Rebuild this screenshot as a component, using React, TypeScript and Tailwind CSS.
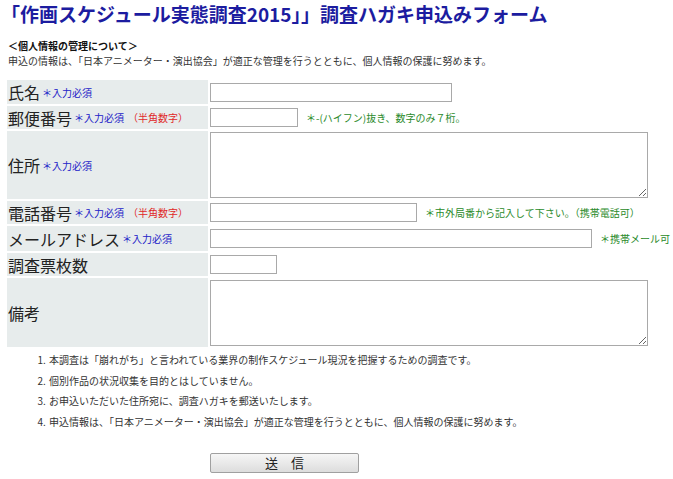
import type { ReactNode } from "react";

const JP = "font-['Noto_Sans_CJK_JP','Noto_Sans',sans-serif]";

function Required() {
  return <span className="ml-[2px] text-[10px] text-[#2323c8]">＊入力必須</span>;
}

function HalfWidth() {
  return <span className="ml-[4px] text-[10px] text-[#e02828]">（半角数字）</span>;
}

function Note({ children }: { children: ReactNode }) {
  return <span className="ml-[8px] text-[10px] text-[#2a8a2a]">{children}</span>;
}

function Row({
  label,
  height,
  children,
}: {
  label: ReactNode;
  height: string;
  children: ReactNode;
}) {
  return (
    <>
      <div className={`flex items-center bg-[#e7ecec] pl-[1px] ${height}`}>
        {label}
      </div>
      <div className={`flex items-center ${height}`}>{children}</div>
    </>
  );
}

const inputCls =
  "h-[19px] border border-[#a9a9a9] bg-white outline-none";
const textareaCls =
  "h-[66px] w-[438px] resize border border-[#a9a9a9] bg-white outline-none";

export default function App() {
  return (
    <div className={`min-h-screen w-[673px] bg-white text-[#333] ${JP}`}>
      <h1 className="pl-[1px] pt-[2px] text-[19px] font-bold leading-[24px] text-[#1c1ca0]">
        「作画スケジュール実態調査2015」」調査ハガキ申込みフォーム
      </h1>

      <div className="mt-[12px] pl-[8px] text-[10px] leading-[15px]">
        <p className="font-bold text-[#111]">＜個人情報の管理について＞</p>
        <p>
          申込の情報は、「日本アニメーター・演出協会」が適正な管理を行うとともに、個人情報の保護に努めます。
        </p>
      </div>

      <div className="ml-[7px] mt-[12px] grid w-[664px] grid-cols-[201px_1fr] gap-[2px]">
        <Row
          height="h-[24px]"
          label={
            <>
              <span className="text-[16px] text-[#222]">氏名</span>
              <Required />
            </>
          }
        >
          <input className={`${inputCls} w-[242px]`} />
        </Row>
        <Row
          height="h-[23px]"
          label={
            <>
              <span className="text-[16px] text-[#222]">郵便番号</span>
              <Required />
              <HalfWidth />
            </>
          }
        >
          <input className={`${inputCls} w-[88px]`} />
          <Note>＊-(ハイフン)抜き、数字のみ７桁。</Note>
        </Row>
        <Row
          height="h-[68px]"
          label={
            <>
              <span className="text-[16px] text-[#222]">住所</span>
              <Required />
            </>
          }
        >
          <textarea className={textareaCls} />
        </Row>
        <Row
          height="h-[23px]"
          label={
            <>
              <span className="text-[16px] text-[#222]">電話番号</span>
              <Required />
              <HalfWidth />
            </>
          }
        >
          <input className={`${inputCls} w-[207px]`} />
          <Note>＊市外局番から記入して下さい。（携帯電話可）</Note>
        </Row>
        <Row
          height="h-[25px]"
          label={
            <>
              <span className="text-[16px] text-[#222]">メールアドレス</span>
              <Required />
            </>
          }
        >
          <input className={`${inputCls} w-[382px]`} />
          <Note>＊携帯メール可</Note>
        </Row>
        <Row
          height="h-[23px]"
          label={<span className="text-[16px] text-[#222]">調査票枚数</span>}
        >
          <input className={`${inputCls} w-[67px]`} />
        </Row>
        <Row
          height="h-[69px]"
          label={<span className="text-[16px] text-[#222]">備考</span>}
        >
          <textarea className={textareaCls} />
        </Row>
      </div>

      <ol className="mt-[3px] list-decimal pl-[48px] text-[10px] leading-[20.5px]">
        <li className="pl-[1px]">
          本調査は「崩れがち」と言われている業界の制作スケジュール現況を把握するための調査です。
        </li>
        <li className="pl-[1px]">個別作品の状況収集を目的とはしていません。</li>
        <li className="pl-[1px]">お申込いただいた住所宛に、調査ハガキを郵送いたします。</li>
        <li className="pl-[1px]">
          申込情報は、「日本アニメーター・演出協会」が適正な管理を行うとともに、個人情報の保護に努めます。
        </li>
      </ol>

      <div className="mt-[17px] pl-[210px]">
        <button
          type="button"
          className="h-[20px] w-[149px] rounded-[2px] border border-[#a0a0a0] bg-gradient-to-b from-[#f6f6f6] to-[#dddddd] text-[13px] leading-[18px] text-[#222]"
        >
          送　信
        </button>
      </div>
    </div>
  );
}
